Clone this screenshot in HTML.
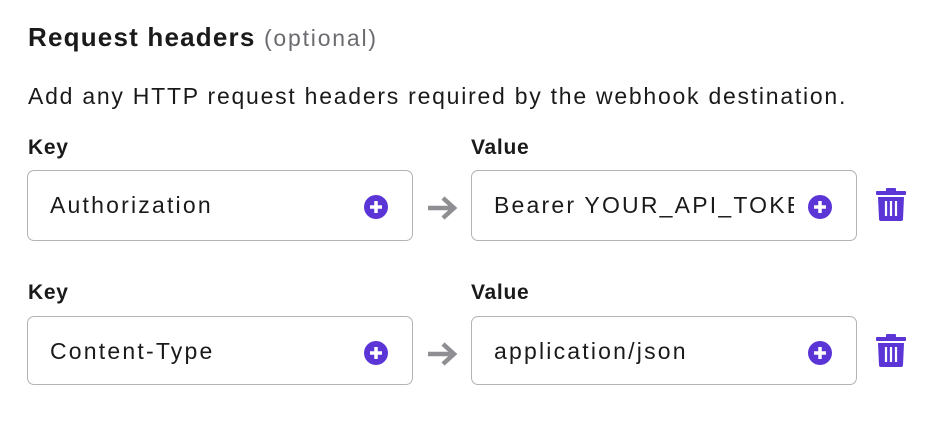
<!DOCTYPE html>
<html><head><style>
body{margin:0;width:938px;height:426px;background:#fff;font-family:"Liberation Sans",sans-serif;color:#1a1a1a;position:relative;overflow:hidden}
.a{position:absolute;white-space:nowrap}
.t{left:28px;top:22px;font-size:26px;font-weight:bold;letter-spacing:1.2px}
.t span{font-weight:normal;color:#6b6b70;font-size:23px;letter-spacing:1.8px}
.d{left:28px;top:83px;font-size:23px;letter-spacing:1.75px}
.l{font-size:21px;font-weight:bold;letter-spacing:0.7px}
.box{position:absolute;border:1px solid #b2b2b8;border-radius:7px;height:68px;width:384px;box-sizing:border-box;overflow:hidden}
.box span{position:absolute;left:22px;top:21px;font-size:23px;letter-spacing:2.2px;width:300px;overflow:hidden;white-space:nowrap}
.plus{position:absolute;right:23px;top:22px}
</style></head><body>
<div class="a t">Request headers <span>(optional)</span></div>
<div class="a d">Add any HTTP request headers required by the webhook destination.</div>

<div class="a l" style="left:28px;top:136px">Key</div>
<div class="a l" style="left:471px;top:136px">Value</div>
<div class="box" style="left:27px;top:170px;width:386px;height:71px"><span>Authorization</span><svg class="plus" width="26" height="26" viewBox="0 0 26 26"><circle cx="13" cy="14" r="12" fill="#5b35d5"/><path d="M13 8v12M7 14h12" stroke="#fff" stroke-width="3.5"/></svg></div>
<svg class="a" style="left:425px;top:193px" width="34" height="30" viewBox="0 0 34 30"><path d="M3 15h26M18 5l11 10-11 10" stroke="#8e8e93" stroke-width="4.5" fill="none"/></svg>
<div class="box" style="left:471px;top:170px;width:386px;height:71px"><span>Bearer YOUR_API_TOKEN</span><svg class="plus" width="26" height="26" viewBox="0 0 26 26"><circle cx="13" cy="14" r="12" fill="#5b35d5"/><path d="M13 8v12M7 14h12" stroke="#fff" stroke-width="3.5"/></svg></div>
<svg class="a" style="left:875px;top:187px" width="32" height="35" viewBox="0 0 32 35"><rect x="1" y="4" width="30" height="4" rx="1" fill="#5b35d5"/><rect x="11" y="1" width="10" height="4" rx="1" fill="#5b35d5"/><path d="M3 10h26l-1 22a2 2 0 0 1-2 2H6a2 2 0 0 1-2-2z" fill="#5b35d5"/><path d="M11 14v15M16 14v15M21 14v15" stroke="#fff" stroke-width="2.2"/></svg>

<div class="a l" style="left:28px;top:281px">Key</div>
<div class="a l" style="left:471px;top:281px">Value</div>
<div class="box" style="left:27px;top:316px;width:386px;height:69px"><span>Content-Type</span><svg class="plus" width="26" height="26" viewBox="0 0 26 26"><circle cx="13" cy="14" r="12" fill="#5b35d5"/><path d="M13 8v12M7 14h12" stroke="#fff" stroke-width="3.5"/></svg></div>
<svg class="a" style="left:425px;top:339px" width="34" height="30" viewBox="0 0 34 30"><path d="M3 15h26M18 5l11 10-11 10" stroke="#8e8e93" stroke-width="4.5" fill="none"/></svg>
<div class="box" style="left:471px;top:316px;width:386px;height:69px"><span>application/json</span><svg class="plus" width="26" height="26" viewBox="0 0 26 26"><circle cx="13" cy="14" r="12" fill="#5b35d5"/><path d="M13 8v12M7 14h12" stroke="#fff" stroke-width="3.5"/></svg></div>
<svg class="a" style="left:875px;top:333px" width="32" height="35" viewBox="0 0 32 35"><rect x="1" y="4" width="30" height="4" rx="1" fill="#5b35d5"/><rect x="11" y="1" width="10" height="4" rx="1" fill="#5b35d5"/><path d="M3 10h26l-1 22a2 2 0 0 1-2 2H6a2 2 0 0 1-2-2z" fill="#5b35d5"/><path d="M11 14v15M16 14v15M21 14v15" stroke="#fff" stroke-width="2.2"/></svg>
</body></html>
